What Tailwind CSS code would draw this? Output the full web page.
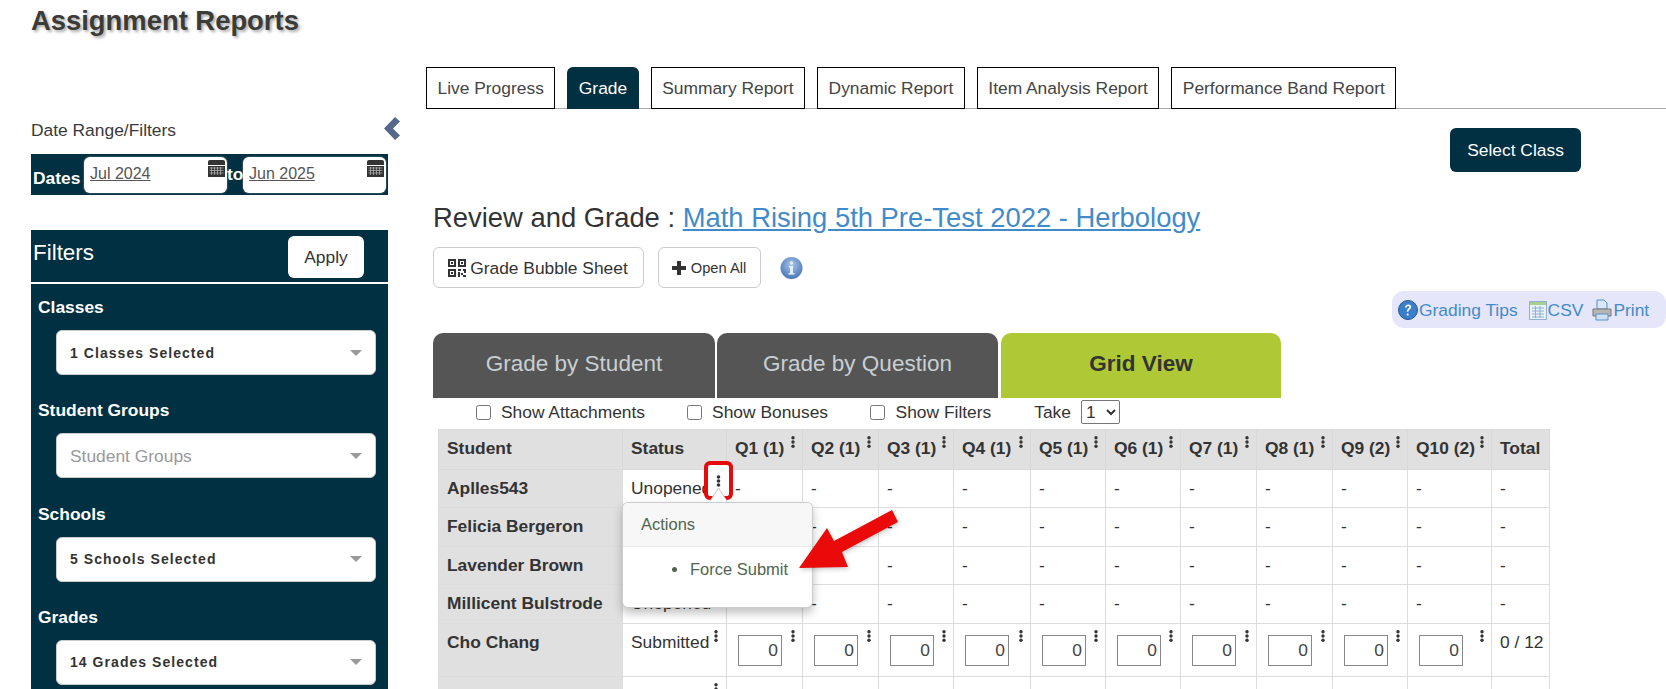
<!DOCTYPE html>
<html lang="en">
<head>
    <meta charset="UTF-8">
    <title>Assignment Reports</title>
    <script src="https://cdn.jsdelivr.net/npm/@tailwindcss/browser@4"></script>
</head>
<body class="bg-white">
<div class="relative h-[689px] overflow-hidden text-[17.4px] leading-[24px] text-[#333] [font-family:'Liberation_Sans',Arial,sans-serif]">
    <h1 class="h-[67px] pl-[31px] pt-[2px] text-[27.4px] leading-[38px] font-bold text-[#3b3b38] [text-shadow:2px_2px_3px_#aaa]">Assignment Reports</h1>

    <div class="flex">
        <!-- left filters -->
        <aside class="relative ml-[31px] w-[357px] shrink-0">
            <div class="flex h-[87px] items-end pb-[12px] text-[#3a3a3a]">Date Range/Filters</div>
            <svg class="absolute right-[-12px] top-[50px]" width="16" height="23" viewBox="0 0 16 23"><path d="M11 0l5 4.500-7 7 7 7-5 4.500L0 11.500z" fill="#56688a"/></svg>

            <div class="flex h-[41px] bg-[#003042] font-bold text-white">
                <span class="ml-[2px] w-[51px] pt-[12px]">Dates</span>
                <div class="mt-[3px] flex h-[36px] w-[143px] items-start justify-between rounded-md bg-white pl-[6px] pr-[2px] pt-[2px] text-[16px] font-normal text-[#555] shadow-[0_0_2px_#999]">
                    <span class="mt-[3px] underline">Jul 2024</span>
                    <svg width="17" height="18" viewBox="0 0 17 18"><path d="M0 6V3q0-2 2-2h13q2 0 2 2v3z" fill="#333"/><path d="M0 7h17v11H0z" fill="#333"/><path d="M1.500 9h14M1.500 11.500h14M1.500 14h14M3.500 8v8M6.500 8v8M9.500 8v8M12.500 8v8" stroke="#aaa" stroke-width=".8"/></svg>
                </div>
                <span class="w-[16px] pt-[8px] text-center">to</span>
                <div class="mt-[3px] flex h-[36px] w-[143px] items-start justify-between rounded-md bg-white pl-[6px] pr-[2px] pt-[2px] text-[16px] font-normal text-[#555] shadow-[0_0_2px_#999]">
                    <span class="mt-[3px] underline">Jun 2025</span>
                    <svg width="17" height="18" viewBox="0 0 17 18"><path d="M0 6V3q0-2 2-2h13q2 0 2 2v3z" fill="#333"/><path d="M0 7h17v11H0z" fill="#333"/><path d="M1.500 9h14M1.500 11.500h14M1.500 14h14M3.500 8v8M6.500 8v8M9.500 8v8M12.500 8v8" stroke="#aaa" stroke-width=".8"/></svg>
                </div>
            </div>

            <div class="mt-[35px] h-[480px] bg-[#003042]">
                <div class="flex h-[52px] border-b-0 pl-[2px]">
                    <span class="pt-[9px] text-[22.4px] leading-[28px] text-white">Filters</span>
                    <button class="ml-[194px] mt-[6px] h-[42px] w-[76px] rounded-md bg-white text-[#333]">Apply</button>
                </div>
                <div class="h-[2px] bg-white"></div>
                <div id="filters" class="pt-[11px]"></div>
            </div>
        </aside>

        <!-- main column -->
        <main class="ml-[38px] min-w-0 flex-1">
            <div class="flex h-[42px] gap-[12px] border-b border-[#aaa]">
                <a class="h-[42px] border border-black bg-white px-[10.500px] pt-[8px] text-[#444]">Live Progress</a>
                <a class="h-[42px] rounded-t-md bg-[#003042] px-[11.500px] pt-[9px] text-white">Grade</a>
                <a class="h-[42px] border border-black bg-white px-[10.500px] pt-[8px] text-[#444]">Summary Report</a>
                <a class="h-[42px] border border-black bg-white px-[10.500px] pt-[8px] text-[#444]">Dynamic Report</a>
                <a class="h-[42px] border border-black bg-white px-[10.500px] pt-[8px] text-[#444]">Item Analysis Report</a>
                <a class="h-[42px] border border-black bg-white px-[10.500px] pt-[8px] text-[#444]">Performance Band Report</a>
            </div>

            <div class="mt-[19px] flex justify-end pr-[85px]">
                <button class="h-[44px] w-[131px] rounded-md bg-[#003042] text-white">Select Class</button>
            </div>

            <h2 class="mt-[27px] h-[38px] pl-[7px] text-[27.4px] leading-[38px] text-[#333]">Review and Grade : <a class="text-[#428bca] underline">Math Rising 5th Pre-Test 2022 - Herbology</a></h2>

            <div class="mt-[10px] flex items-center pl-[6.500px]">
                <button class="flex h-[41px] w-[211px] items-center justify-center gap-[4px] rounded-md border border-[#ccc] bg-white">
                    <svg width="18" height="18" viewBox="0 0 18 18" fill="#333"><path fill-rule="evenodd" d="M0 0h8v8H0zM2 2v4h4V2zM10 0h8v8h-8zM12 2v4h4V2zM0 10h8v8H0zM2 12v4h4v-4z"/><path d="M3 3h2v2H3zM13 3h2v2h-2zM3 13h2v2H3zM10 10h3v2h-3zM15 10h3v4h-2v-2h-1zM10 13h2v5h-2zM13 14h2v2h-2zM15 16h3v2h-3z"/></svg>
                    <span>Grade Bubble Sheet</span>
                </button>
                <button class="ml-[14px] flex h-[41px] w-[103px] items-center justify-center gap-[5px] rounded-md border border-[#ccc] bg-white text-[14.700px]">
                    <svg width="14" height="14" viewBox="0 0 14 14" fill="#333"><path d="M5 0h4v5h5v4H9v5H5V9H0V5h5z"/></svg>
                    <span>Open All</span>
                </button>
                <svg class="ml-[19px]" width="23" height="24" viewBox="0 0 23 24">
                    <defs><radialGradient id="infoFill" cx=".5" cy=".35" r=".7"><stop offset="0" stop-color="#a9c4e8"/><stop offset="1" stop-color="#3f71b5"/></radialGradient></defs>
                    <circle cx="11.500" cy="12" r="11" fill="url(#infoFill)"/>
                    <circle cx="11.500" cy="7" r="1.800" fill="#e6eefa"/>
                    <path d="M9 10h4v7h1.500v1.500h-6V17H10v-5.500H9z" fill="#e6eefa"/>
                </svg>
            </div>

            <div class="mt-[3px] flex justify-end">
                <div class="flex h-[37px] w-[274px] items-center rounded-[12px] bg-[#e6e6fa] pl-[6px] text-[#428bca]">
                    <svg width="20" height="22" viewBox="0 0 20 22"><circle cx="10" cy="11" r="9.500" fill="#3a7fc9" stroke="#22599b"/><path d="M7 8.500q.5-3 3.200-3 3 0 3 2.600 0 1.500-1.600 2.500-1.300.8-1.300 2.200H8.800q0-2.200 1.500-3.200 1-.7 1-1.500 0-1-1.100-1-1 0-1.300 1.400zM8.800 14.500h1.700v2H8.800z" fill="#fff"/></svg>
                    <span class="ml-[1px]">Grading Tips</span>
                    <svg class="ml-[11px]" width="18" height="20" viewBox="0 0 18 20"><path d="M.5 1.500h17v18H.5z" fill="#e8f0f8" stroke="#8fb0d0"/><path d="M1 2h16v3H1z" fill="#a8cf8e"/><path d="M3 8h12M3 11h12M3 14h12M3 17h12M6.500 6v12M11 6v12" stroke="#8fb0d0"/></svg>
                    <span class="ml-[1px]">CSV</span>
                    <svg class="ml-[9px]" width="20" height="22" viewBox="0 0 20 22"><path d="M5 1h7l3 3v6H5z" fill="#d8e8fa" stroke="#5b8ec4"/><path d="M1 10h18v7H1z" fill="#b5b5b5" stroke="#777"/><path d="M4 15h12v6H4z" fill="#cfe0f4" stroke="#5b8ec4"/></svg>
                    <span class="ml-[1px]">Print</span>
                </div>
            </div>

            <div class="mt-[5px] flex h-[65px] pl-[7px] text-[22.500px]">
                <div class="flex w-[282px] items-center justify-center rounded-t-[10px] bg-[#555] pb-[3px] text-[#c8cfd3]">Grade by Student</div>
                <div class="ml-[2px] flex w-[281px] items-center justify-center rounded-t-[10px] bg-[#555] pb-[3px] text-[#c8cfd3]">Grade by Question</div>
                <div class="ml-[3px] flex w-[280px] items-center justify-center rounded-t-[10px] bg-[#afc936] pb-[3px] font-bold text-[#333]">Grid View</div>
            </div>

            <div class="flex h-[31px] items-center pl-[50px] pb-[3px]">
                <input type="checkbox" class="h-[15px] w-[15px]">
                <span class="ml-[10px]">Show Attachments</span>
                <input type="checkbox" class="ml-[42px] h-[15px] w-[15px]">
                <span class="ml-[10px]">Show Bonuses</span>
                <input type="checkbox" class="ml-[42px] h-[15px] w-[15px]">
                <span class="ml-[10.500px]">Show Filters</span>
                <span class="ml-[43px]">Take</span>
                <select class="ml-[10px] h-[24px] w-[39px] rounded-[2px] border border-[#767676] text-[#333]"><option>1</option></select>
            </div>

            <div class="relative ml-[12px] w-[1111px]">
                <table class="w-[1111px] table-fixed border-collapse">
                    <colgroup>
                        <col class="w-[184px]"><col class="w-[104px]"><col class="w-[76px]"><col class="w-[76px]"><col class="w-[75px]"><col class="w-[77px]"><col class="w-[75px]"><col class="w-[75px]"><col class="w-[76px]"><col class="w-[76px]"><col class="w-[75px]"><col class="w-[84px]"><col class="w-[58px]">
                    </colgroup>
                    <thead id="head"></thead>
                    <tbody id="rows"></tbody>
                </table>

                <!-- actions popover -->
                <div class="absolute left-[184px] top-[73px] z-10 h-[106px] w-[191px] overflow-hidden rounded-md border border-black/20 bg-white text-[16.500px] text-[#51654f] shadow-[0_5px_10px_rgba(0,0,0,.25)]">
                    <div class="h-[44px] border-b border-[#ebebeb] bg-[#f7f7f7] pl-[18px] pt-[9px]">Actions</div>
                    <div class="flex items-center pl-[49px] pt-[10px]"><span class="h-[5px] w-[5px] rounded-full bg-[#51654f]"></span><span class="ml-[13px] text-[#51654f]">Force Submit</span></div>
                </div>

                <!-- red highlight round the row menu -->
                <div class="absolute left-[266px] top-[32px] z-20 flex h-[39px] w-[29px] justify-center rounded-[6px] border-[4px] border-[#e60a0a] bg-white pt-[10px]">
                    <svg width="5" height="12" viewBox="0 0 5 12" fill="#333"><circle cx="2.500" cy="2" r="1.800"/><circle cx="2.500" cy="6" r="1.800"/><circle cx="2.500" cy="10" r="1.800"/></svg>
                </div>
                <svg class="absolute left-[271px] top-[58px] z-30" width="20" height="15" viewBox="0 0 20 15"><path d="M1 14L9.500 1 18 14" fill="#fff" stroke="#c4c4c4"/></svg>

                <!-- red pointer -->
                <svg class="absolute left-[357px] top-[76px] z-30 drop-shadow-[1px_2px_2px_rgba(0,0,0,.2)]" width="105" height="66" viewBox="0 0 105 66"><polygon points="4,63 32,23 39,36 97,5 103,17 47,47 53,62" fill="#eb0a0a"/></svg>
            </div>
        </main>
    </div>
</div>

<script>
    const kebab = `<svg class="shrink-0" width="4" height="12" viewBox="0 0 4 12" fill="#333"><circle cx="2" cy="1.700" r="1.700"/><circle cx="2" cy="6" r="1.700"/><circle cx="2" cy="10.300" r="1.700"/></svg>`;
    const questions = ["Q1 (1)", "Q2 (1)", "Q3 (1)", "Q4 (1)", "Q5 (1)", "Q6 (1)", "Q7 (1)", "Q8 (1)", "Q9 (2)", "Q10 (2)"];

    const filters = [
        { label: "Classes", value: "1 Classes Selected" },
        { label: "Student Groups", placeholder: true },
        { label: "Schools", value: "5 Schools Selected" },
        { label: "Grades", value: "14 Grades Selected" }
    ];
    document.getElementById("filters").innerHTML = filters.map(f => `
        <div class="mb-[23.300px]">
            <div class="h-[35px] pl-[7px] font-bold text-white">${f.label}</div>
            <div class="ml-[25px] flex h-[45px] w-[320px] items-center justify-between rounded-md border border-[#ccc] bg-white pl-[13px] pr-[13px]">
                ${f.placeholder
                    ? `<span class="text-[#999]">${f.label}</span>`
                    : `<span class="text-[14px] font-bold tracking-[1.050px] text-[#333]">${f.value}</span>`}
                <span class="h-0 w-0 border-x-[6px] border-t-[6px] border-x-transparent border-t-[#999]"></span>
            </div>
        </div>`).join("");

    let head = `<tr class="h-[40px] bg-[#e0e0e0] font-bold">
        <th class="border border-[#d9d9d9] px-[8px] pt-[6px] text-left align-top">Student</th>
        <th class="border border-[#d9d9d9] px-[8px] pt-[6px] text-left align-top">Status</th>`;
    questions.forEach(q => {
        head += `<th class="border border-[#d9d9d9] p-0 text-left align-top"><div class="flex justify-between pl-[8px] pr-[7px] pt-[6px]"><span class="whitespace-nowrap">${q}</span>${kebab}</div></th>`;
    });
    head += `<th class="border border-[#d9d9d9] px-[8px] pt-[6px] text-left align-top">Total</th></tr>`;
    document.getElementById("head").innerHTML = head;

    const students = [
        { name: "Aplles543", status: "Unopened", height: "h-[38px]" },
        { name: "Felicia Bergeron", status: "Unopened", height: "h-[39px]" },
        { name: "Lavender Brown", status: "Unopened", height: "h-[38px]" },
        { name: "Millicent Bulstrode", status: "Unopened", height: "h-[39px]" },
        { name: "Cho Chang", status: "Submitted", height: "h-[53px]", inputs: true },
        { name: "Hermione Granger", status: "Unopened", height: "h-[39px]" }
    ];
    document.getElementById("rows").innerHTML = students.map(s => {
        let row = `<tr class="${s.height}">
            <td class="border border-[#dcdcdc] bg-[#e0e0e0] px-[8px] pt-[6px] align-top font-bold whitespace-nowrap">${s.name}</td>
            <td class="border border-[#ddd] p-0 align-top"><div class="flex justify-between pl-[8px] pr-[8px] pt-[6px]"><span>${s.status}</span>${kebab}</div></td>`;
        questions.forEach(() => {
            row += s.inputs
                ? `<td class="border border-[#ddd] p-0 align-top"><div class="flex justify-between pl-[11px] pr-[7px] pt-[6px]"><input value="0" class="mt-[5px] h-[31px] w-[44px] border border-[#888] pr-[3px] text-right text-[#444]">${kebab}</div></td>`
                : `<td class="border border-[#ddd] px-[8px] pt-[6px] align-top">-</td>`;
        });
        row += `<td class="border border-[#ddd] px-[8px] pt-[6px] align-top whitespace-nowrap">${s.inputs ? "0 / 12" : "-"}</td></tr>`;
        return row;
    }).join("");
</script>
</body>
</html>
